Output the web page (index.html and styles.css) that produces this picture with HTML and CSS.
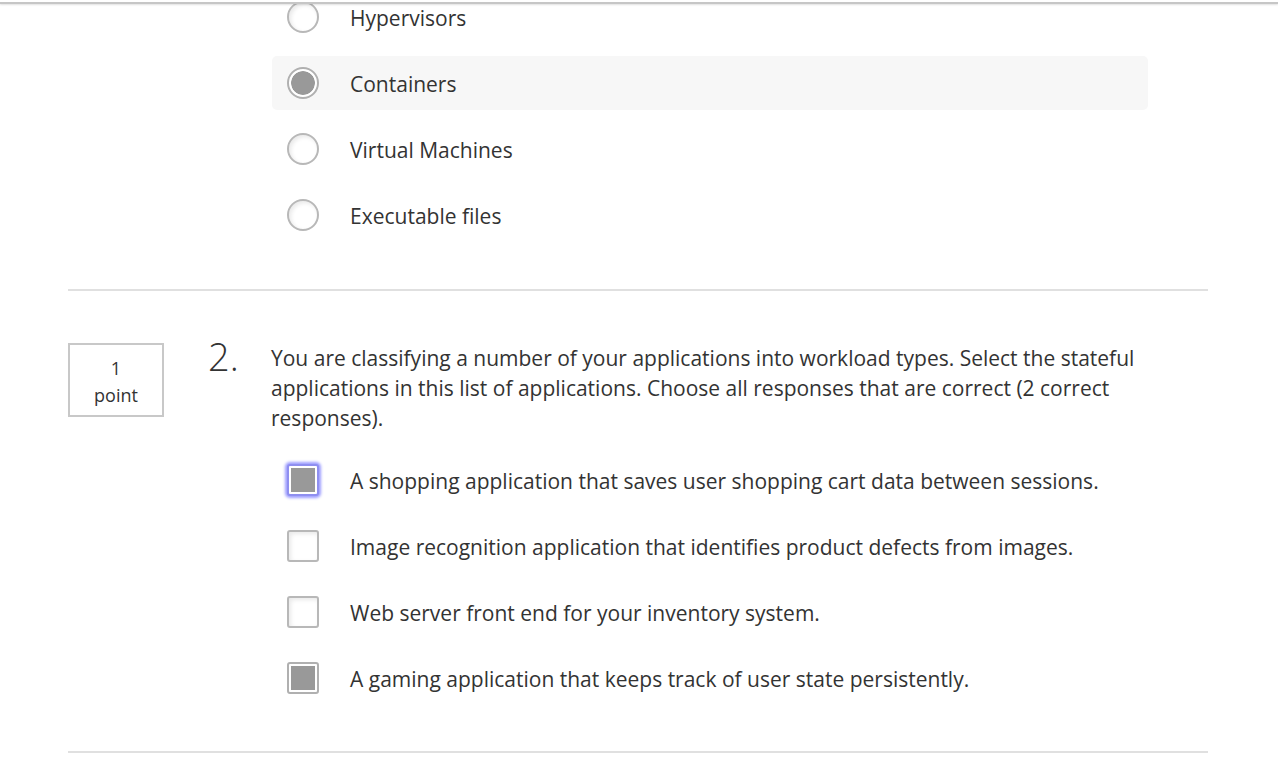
FILE: index.html
```html
<!DOCTYPE html>
<html lang="en">
<head>
<meta charset="utf-8">
<title>Quiz</title>
<link rel="stylesheet" href="styles.css">
</head>
<body>
<div class="topbar"></div>
<main class="page">
  <section class="question q-first">
    <div class="q-point-col"></div>
    <div class="q-num"></div>
    <div class="q-body">
      <ul class="options">
        <li class="option"><span class="radio"></span><span class="opt-text">Hypervisors</span></li>
        <li class="option selected"><span class="radio checked"></span><span class="opt-text">Containers</span></li>
        <li class="option"><span class="radio"></span><span class="opt-text">Virtual Machines</span></li>
        <li class="option"><span class="radio"></span><span class="opt-text">Executable files</span></li>
      </ul>
    </div>
  </section>
  <hr class="sep">
  <section class="question q-second">
    <div class="q-point-col">
      <div class="points"><span>1</span><span>point</span></div>
    </div>
    <div class="q-num">2.</div>
    <div class="q-body">
      <p class="q-text">You are classifying a number of your applications into workload types. Select the stateful applications in this list of applications. Choose all responses that are correct (2 correct responses).</p>
      <ul class="options">
        <li class="option"><span class="checkbox checked focused"></span><span class="opt-text">A shopping application that saves user shopping cart data between sessions.</span></li>
        <li class="option"><span class="checkbox"></span><span class="opt-text">Image recognition application that identifies product defects from images.</span></li>
        <li class="option"><span class="checkbox"></span><span class="opt-text">Web server front end for your inventory system.</span></li>
        <li class="option"><span class="checkbox checked"></span><span class="opt-text">A gaming application that keeps track of user state persistently.</span></li>
      </ul>
    </div>
  </section>
  <hr class="sep sep-bottom">
</main>
</body>
</html>
```
FILE: styles.css
```css
* { box-sizing: border-box; }
html, body { margin: 0; padding: 0; background: #fff; }
body {
  font-family: "Open Sans", "Liberation Sans", sans-serif;
  color: #333;
  overflow: hidden;
  height: 761px;
}
.topbar {
  position: fixed;
  top: 0; left: 0; right: 0;
  height: 4px;
  background: #fff;
  border-bottom: 2px solid #c6c6c6;
  box-shadow: 0 1px 2px rgba(0,0,0,0.12);
  z-index: 10;
}
.page {
  width: 1140px;
  margin-left: 68px;
}
.question {
  display: grid;
  grid-template-columns: 142px 61px 877px;
}
.q-first { margin-top: -10px; }
.points {
  width: 96px;
  height: 74px;
  border: 2px solid #c8c8c8;
  display: flex;
  flex-direction: column;
  align-items: center;
  justify-content: center;
  padding-top: 3px;
  font-size: 18px;
  line-height: 27px;
  color: #333;
}
.q-num {
  font-size: 38px;
  font-weight: 300;
  line-height: 30px;
  margin-top: -2px;
  margin-left: -2px;
  color: #333;
}
.q-second { margin-top: 52px; }
.q-text {
  margin: 0;
  font-size: 21px;
  line-height: 30px;
}
.options {
  list-style: none;
  margin: 0;
  padding: 0;
}
.q-second .options { margin-top: 20px; }
.option {
  display: flex;
  align-items: center;
  gap: 31px;
  height: 54px;
  padding: 0 15px;
  margin-left: 1px;
  margin-bottom: 12px;
  width: 876px;
  border-radius: 5px;
  font-size: 21px;
}
.option:last-child { margin-bottom: 0; }
.option.selected { background: #f7f7f7; }
.opt-text { padding-top: 2px; }
.radio, .checkbox {
  flex: none;
  width: 32px;
  height: 32px;
  border: 2px solid #b8b8b8;
  padding: 2px;
  background: #fff;
  box-shadow: inset 2px 2px 4px rgba(0,0,0,0.09);
}
.radio { border-radius: 50%; }
.checkbox { border-radius: 3px; }
.radio.checked, .checkbox.checked {
  background: #999 content-box;
  border-color: #b0b0b0;
  box-shadow: inset 0 0 0 2px #fff;
}
.radio.checked { background: radial-gradient(circle, #999 0 11.5px, #fff 12.5px); }
.checkbox.focused {
  box-shadow: inset 0 0 0 2px #fff, 0 0 3px 2px #9d9dff;
  border-color: #8f8ff0;
}
.sep {
  margin: 47px 0 0;
  border: 0;
  height: 2px;
  background: #e0e0e0;
}
.sep-bottom { margin-top: 46px; }
```
